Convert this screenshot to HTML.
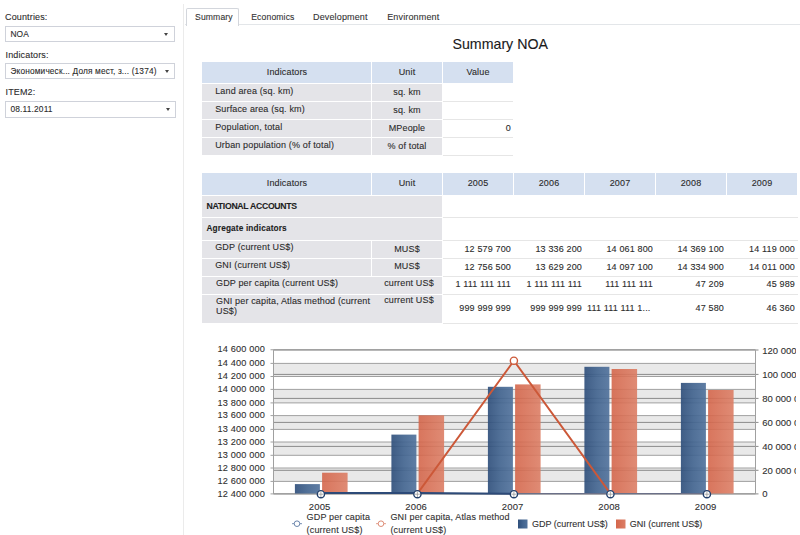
<!DOCTYPE html>
<html><head><meta charset="utf-8"><title>Summary NOA</title>
<style>
html,body{margin:0;padding:0;background:#fff;width:800px;height:535px;overflow:hidden;position:relative}
body{font-family:"Liberation Sans", sans-serif}
.t{position:absolute;white-space:pre;font-family:"Liberation Sans", sans-serif;-webkit-text-stroke:0.1px currentColor;letter-spacing:0.15px}
.r{position:absolute}
</style></head><body>
<div class="t" style="left:5.00px;top:13.38px;font-size:9px;line-height:9px;color:#2b2b2b;font-weight:normal;">Countries:</div>
<div class="r" style="left:5px;top:26px;width:168px;height:14px;border:1px solid #cfd2da;background:#fff"></div>
<div class="t" style="left:10.40px;top:29.79px;font-size:8.4px;line-height:8.4px;color:#2b2b2b;font-weight:normal;">NOA</div>
<div class="r" style="left:164px;top:32.5px;width:0;height:0;border-left:2.5px solid transparent;border-right:2.5px solid transparent;border-top:3px solid #444"></div>
<div class="t" style="left:5.50px;top:50.68px;font-size:9px;line-height:9px;color:#2b2b2b;font-weight:normal;">Indicators:</div>
<div class="r" style="left:5px;top:63px;width:168px;height:14px;border:1px solid #cfd2da;background:#fff"></div>
<div class="t" style="left:10.50px;top:67.37px;font-size:8.3px;line-height:8.3px;color:#2b2b2b;font-weight:normal;">Экономическ... Доля мест, з... (1374)</div>
<div class="r" style="left:164.5px;top:70px;width:0;height:0;border-left:2.5px solid transparent;border-right:2.5px solid transparent;border-top:3px solid #444"></div>
<div class="t" style="left:5.50px;top:88.38px;font-size:9px;line-height:9px;color:#2b2b2b;font-weight:normal;">ITEM2:</div>
<div class="r" style="left:5px;top:101px;width:169px;height:15px;border:1px solid #cfd2da;background:#fff"></div>
<div class="t" style="left:10.50px;top:105.09px;font-size:8.4px;line-height:8.4px;color:#2b2b2b;font-weight:normal;">08.11.2011</div>
<div class="r" style="left:165.5px;top:108px;width:0;height:0;border-left:2.5px solid transparent;border-right:2.5px solid transparent;border-top:3px solid #444"></div>
<div class="r" style="left:183px;top:4px;width:1px;height:531px;background:#ebebeb;"></div>
<div class="r" style="left:185px;top:24px;width:615px;height:1px;background:#e3e6e9;"></div>
<div class="r" style="left:186px;top:8px;width:51px;height:17px;border:1px solid #d3d6dc;border-bottom:none;background:#fff;border-radius:2px 2px 0 0"></div>
<div class="t" style="left:195.00px;top:13.32px;font-size:8.6px;line-height:8.6px;color:#333;font-weight:normal;">Summary</div>
<div class="t" style="left:251.20px;top:13.12px;font-size:8.6px;line-height:8.6px;color:#333;font-weight:normal;">Economics</div>
<div class="t" style="left:313.00px;top:12.78px;font-size:9px;line-height:9px;color:#333;font-weight:normal;">Development</div>
<div class="t" style="left:387.20px;top:12.78px;font-size:9px;line-height:9px;color:#333;font-weight:normal;">Environment</div>
<div class="t" style="left:452.50px;top:37.48px;font-size:14.2px;line-height:14.2px;color:#1a1a1a;font-weight:normal;letter-spacing:0">Summary NOA</div>
<div class="r" style="left:202px;top:62px;width:169px;height:21px;background:#d5e0f0;"></div>
<div class="r" style="left:372px;top:62px;width:70px;height:21px;background:#d5e0f0;"></div>
<div class="r" style="left:443px;top:62px;width:70px;height:21px;background:#d5e0f0;"></div>
<div class="t" style="left:187.00px;width:200px;top:67.98px;font-size:9px;line-height:9px;color:#2b2b2b;font-weight:normal;text-align:center;">Indicators</div>
<div class="t" style="left:307.00px;width:200px;top:67.98px;font-size:9px;line-height:9px;color:#2b2b2b;font-weight:normal;text-align:center;">Unit</div>
<div class="t" style="left:378.00px;width:200px;top:67.98px;font-size:9px;line-height:9px;color:#2b2b2b;font-weight:normal;text-align:center;">Value</div>
<div class="r" style="left:202px;top:84px;width:169px;height:17px;background:#e4e4e8;"></div>
<div class="r" style="left:372px;top:84px;width:70px;height:17px;background:#e4e4e8;"></div>
<div class="r" style="left:443px;top:101px;width:70px;height:1px;background:#e6e6e6;"></div>
<div class="t" style="left:215.20px;top:87.18px;font-size:9px;line-height:9px;color:#2b2b2b;font-weight:normal;">Land area (sq. km)</div>
<div class="t" style="left:307.00px;width:200px;top:87.88px;font-size:9px;line-height:9px;color:#2b2b2b;font-weight:normal;text-align:center;">sq. km</div>
<div class="r" style="left:202px;top:102px;width:169px;height:17px;background:#e4e4e8;"></div>
<div class="r" style="left:372px;top:102px;width:70px;height:17px;background:#e4e4e8;"></div>
<div class="r" style="left:443px;top:119px;width:70px;height:1px;background:#e6e6e6;"></div>
<div class="t" style="left:215.20px;top:105.18px;font-size:9px;line-height:9px;color:#2b2b2b;font-weight:normal;">Surface area (sq. km)</div>
<div class="t" style="left:307.00px;width:200px;top:105.88px;font-size:9px;line-height:9px;color:#2b2b2b;font-weight:normal;text-align:center;">sq. km</div>
<div class="r" style="left:202px;top:120px;width:169px;height:17px;background:#e4e4e8;"></div>
<div class="r" style="left:372px;top:120px;width:70px;height:17px;background:#e4e4e8;"></div>
<div class="r" style="left:443px;top:137px;width:70px;height:1px;background:#e6e6e6;"></div>
<div class="t" style="left:215.20px;top:123.18px;font-size:9px;line-height:9px;color:#2b2b2b;font-weight:normal;">Population, total</div>
<div class="t" style="left:307.00px;width:200px;top:123.88px;font-size:9px;line-height:9px;color:#2b2b2b;font-weight:normal;text-align:center;">MPeople</div>
<div class="t" style="right:289.00px;top:123.88px;font-size:9px;line-height:9px;color:#2b2b2b;font-weight:normal;text-align:right;">0</div>
<div class="r" style="left:202px;top:138px;width:169px;height:17px;background:#e4e4e8;"></div>
<div class="r" style="left:372px;top:138px;width:70px;height:17px;background:#e4e4e8;"></div>
<div class="r" style="left:443px;top:155px;width:70px;height:1px;background:#e6e6e6;"></div>
<div class="t" style="left:215.20px;top:141.18px;font-size:9px;line-height:9px;color:#2b2b2b;font-weight:normal;">Urban population (% of total)</div>
<div class="t" style="left:307.00px;width:200px;top:141.88px;font-size:9px;line-height:9px;color:#2b2b2b;font-weight:normal;text-align:center;">% of total</div>
<div class="r" style="left:202px;top:173px;width:169px;height:22px;background:#d5e0f0;"></div>
<div class="r" style="left:372px;top:173px;width:70px;height:22px;background:#d5e0f0;"></div>
<div class="r" style="left:443px;top:173px;width:70px;height:22px;background:#d5e0f0;"></div>
<div class="t" style="left:378.00px;width:200px;top:179.18px;font-size:9px;line-height:9px;color:#2b2b2b;font-weight:normal;text-align:center;">2005</div>
<div class="r" style="left:514px;top:173px;width:70px;height:22px;background:#d5e0f0;"></div>
<div class="t" style="left:449.00px;width:200px;top:179.18px;font-size:9px;line-height:9px;color:#2b2b2b;font-weight:normal;text-align:center;">2006</div>
<div class="r" style="left:585px;top:173px;width:70px;height:22px;background:#d5e0f0;"></div>
<div class="t" style="left:520.00px;width:200px;top:179.18px;font-size:9px;line-height:9px;color:#2b2b2b;font-weight:normal;text-align:center;">2007</div>
<div class="r" style="left:656px;top:173px;width:70px;height:22px;background:#d5e0f0;"></div>
<div class="t" style="left:591.00px;width:200px;top:179.18px;font-size:9px;line-height:9px;color:#2b2b2b;font-weight:normal;text-align:center;">2008</div>
<div class="r" style="left:727px;top:173px;width:70px;height:22px;background:#d5e0f0;"></div>
<div class="t" style="left:662.00px;width:200px;top:179.18px;font-size:9px;line-height:9px;color:#2b2b2b;font-weight:normal;text-align:center;">2009</div>
<div class="t" style="left:187.00px;width:200px;top:179.18px;font-size:9px;line-height:9px;color:#2b2b2b;font-weight:normal;text-align:center;">Indicators</div>
<div class="t" style="left:307.00px;width:200px;top:179.18px;font-size:9px;line-height:9px;color:#2b2b2b;font-weight:normal;text-align:center;">Unit</div>
<div class="r" style="left:202px;top:196px;width:240px;height:21px;background:#e4e4e8;"></div>
<div class="r" style="left:443px;top:217px;width:355px;height:1px;background:#e6e6e6;"></div>
<div class="r" style="left:202px;top:218px;width:240px;height:22px;background:#e4e4e8;"></div>
<div class="r" style="left:443px;top:240px;width:355px;height:1px;background:#e6e6e6;"></div>
<div class="r" style="left:202px;top:241px;width:240px;height:17px;background:#e4e4e8;"></div>
<div class="r" style="left:443px;top:258px;width:355px;height:1px;background:#e6e6e6;"></div>
<div class="r" style="left:202px;top:259px;width:240px;height:17px;background:#e4e4e8;"></div>
<div class="r" style="left:443px;top:276px;width:355px;height:1px;background:#e6e6e6;"></div>
<div class="r" style="left:202px;top:277px;width:240px;height:17px;background:#e4e4e8;"></div>
<div class="r" style="left:443px;top:294px;width:355px;height:1px;background:#e6e6e6;"></div>
<div class="r" style="left:202px;top:295px;width:240px;height:28px;background:#e4e4e8;"></div>
<div class="r" style="left:443px;top:323px;width:355px;height:1px;background:#e6e6e6;"></div>
<div class="r" style="left:371px;top:241px;width:1px;height:17px;background:#fff;"></div>
<div class="r" style="left:371px;top:259px;width:1px;height:17px;background:#fff;"></div>
<div class="t" style="left:206.50px;top:201.94px;font-size:8.7px;line-height:8.7px;color:#1e1e1e;font-weight:bold;letter-spacing:-0.3px">NATIONAL ACCOUNTS</div>
<div class="t" style="left:206.50px;top:225.12px;font-size:8.25px;line-height:8.25px;color:#1e1e1e;font-weight:bold;">Agregate indicators</div>
<div class="t" style="left:215.20px;top:242.98px;font-size:9px;line-height:9px;color:#2b2b2b;font-weight:normal;">GDP (current US$)</div>
<div class="t" style="left:215.20px;top:260.78px;font-size:9px;line-height:9px;color:#2b2b2b;font-weight:normal;">GNI (current US$)</div>
<div class="t" style="left:216.00px;top:278.58px;font-size:9px;line-height:9px;color:#2b2b2b;font-weight:normal;">GDP per capita (current US$)</div>
<div class="t" style="left:216.00px;top:296.68px;font-size:9px;line-height:9px;color:#2b2b2b;font-weight:normal;">GNI per capita, Atlas method (current</div>
<div class="t" style="left:216.00px;top:307.38px;font-size:9px;line-height:9px;color:#2b2b2b;font-weight:normal;">US$)</div>
<div class="t" style="left:307.00px;width:200px;top:244.58px;font-size:9px;line-height:9px;color:#2b2b2b;font-weight:normal;text-align:center;">MUS$</div>
<div class="t" style="left:307.00px;width:200px;top:262.48px;font-size:9px;line-height:9px;color:#2b2b2b;font-weight:normal;text-align:center;">MUS$</div>
<div class="t" style="left:309.00px;width:200px;top:278.58px;font-size:9px;line-height:9px;color:#2b2b2b;font-weight:normal;text-align:center;">current US$</div>
<div class="t" style="left:309.00px;width:200px;top:296.48px;font-size:9px;line-height:9px;color:#2b2b2b;font-weight:normal;text-align:center;">current US$</div>
<div class="t" style="right:289.00px;top:244.68px;font-size:9px;line-height:9px;color:#2b2b2b;font-weight:normal;text-align:right;">12 579 700</div>
<div class="t" style="right:218.00px;top:244.68px;font-size:9px;line-height:9px;color:#2b2b2b;font-weight:normal;text-align:right;">13 336 200</div>
<div class="t" style="right:147.00px;top:244.68px;font-size:9px;line-height:9px;color:#2b2b2b;font-weight:normal;text-align:right;">14 061 800</div>
<div class="t" style="right:76.00px;top:244.68px;font-size:9px;line-height:9px;color:#2b2b2b;font-weight:normal;text-align:right;">14 369 100</div>
<div class="t" style="right:5.00px;top:244.68px;font-size:9px;line-height:9px;color:#2b2b2b;font-weight:normal;text-align:right;">14 119 000</div>
<div class="t" style="right:289.00px;top:262.58px;font-size:9px;line-height:9px;color:#2b2b2b;font-weight:normal;text-align:right;">12 756 500</div>
<div class="t" style="right:218.00px;top:262.58px;font-size:9px;line-height:9px;color:#2b2b2b;font-weight:normal;text-align:right;">13 629 200</div>
<div class="t" style="right:147.00px;top:262.58px;font-size:9px;line-height:9px;color:#2b2b2b;font-weight:normal;text-align:right;">14 097 100</div>
<div class="t" style="right:76.00px;top:262.58px;font-size:9px;line-height:9px;color:#2b2b2b;font-weight:normal;text-align:right;">14 334 900</div>
<div class="t" style="right:5.00px;top:262.58px;font-size:9px;line-height:9px;color:#2b2b2b;font-weight:normal;text-align:right;">14 011 000</div>
<div class="t" style="right:289.00px;top:280.38px;font-size:9px;line-height:9px;color:#2b2b2b;font-weight:normal;text-align:right;">1 111 111 111</div>
<div class="t" style="right:218.00px;top:280.38px;font-size:9px;line-height:9px;color:#2b2b2b;font-weight:normal;text-align:right;">1 111 111 111</div>
<div class="t" style="right:147.00px;top:280.38px;font-size:9px;line-height:9px;color:#2b2b2b;font-weight:normal;text-align:right;">111 111 111</div>
<div class="t" style="right:76.00px;top:280.38px;font-size:9px;line-height:9px;color:#2b2b2b;font-weight:normal;text-align:right;">47 209</div>
<div class="t" style="right:5.00px;top:280.38px;font-size:9px;line-height:9px;color:#2b2b2b;font-weight:normal;text-align:right;">45 989</div>
<div class="t" style="right:289.00px;top:304.38px;font-size:9px;line-height:9px;color:#2b2b2b;font-weight:normal;text-align:right;">999 999 999</div>
<div class="t" style="right:218.00px;top:304.38px;font-size:9px;line-height:9px;color:#2b2b2b;font-weight:normal;text-align:right;">999 999 999</div>
<div class="t" style="left:587.00px;top:304.38px;font-size:9px;line-height:9px;color:#2b2b2b;font-weight:normal;">111 111 111 1...</div>
<div class="t" style="right:76.00px;top:304.38px;font-size:9px;line-height:9px;color:#2b2b2b;font-weight:normal;text-align:right;">47 580</div>
<div class="t" style="right:5.00px;top:304.38px;font-size:9px;line-height:9px;color:#2b2b2b;font-weight:normal;text-align:right;">46 360</div>
<svg class="r" style="left:0;top:0" width="800" height="535" viewBox="0 0 800 535"><rect x="273.5" y="468.00" width="482.0" height="13.40" fill="#e9e9e9"/><rect x="273.5" y="442.00" width="482.0" height="13.30" fill="#e9e9e9"/><rect x="273.5" y="415.60" width="482.0" height="13.80" fill="#e9e9e9"/><rect x="273.5" y="389.40" width="482.0" height="13.50" fill="#e9e9e9"/><rect x="273.5" y="363.40" width="482.0" height="13.10" fill="#e9e9e9"/><line x1="270.5" y1="493.9" x2="755.5" y2="493.9" stroke="#a0a0a0" stroke-width="1"/><line x1="270.5" y1="481.4" x2="755.5" y2="481.4" stroke="#a0a0a0" stroke-width="1"/><line x1="270.5" y1="468.0" x2="755.5" y2="468.0" stroke="#a0a0a0" stroke-width="1"/><line x1="270.5" y1="455.3" x2="755.5" y2="455.3" stroke="#a0a0a0" stroke-width="1"/><line x1="270.5" y1="442.0" x2="755.5" y2="442.0" stroke="#a0a0a0" stroke-width="1"/><line x1="270.5" y1="429.4" x2="755.5" y2="429.4" stroke="#a0a0a0" stroke-width="1"/><line x1="270.5" y1="415.6" x2="755.5" y2="415.6" stroke="#a0a0a0" stroke-width="1"/><line x1="270.5" y1="402.9" x2="755.5" y2="402.9" stroke="#a0a0a0" stroke-width="1"/><line x1="270.5" y1="389.4" x2="755.5" y2="389.4" stroke="#a0a0a0" stroke-width="1"/><line x1="270.5" y1="376.5" x2="755.5" y2="376.5" stroke="#a0a0a0" stroke-width="1"/><line x1="270.5" y1="363.4" x2="755.5" y2="363.4" stroke="#a0a0a0" stroke-width="1"/><line x1="270.5" y1="349.75" x2="755.5" y2="349.75" stroke="#a0a0a0" stroke-width="1"/><line x1="273.5" y1="493.9" x2="758.5" y2="493.9" stroke="#8a8a8a" stroke-width="1"/><line x1="273.5" y1="470.3" x2="758.5" y2="470.3" stroke="#8a8a8a" stroke-width="1"/><line x1="273.5" y1="446.4" x2="758.5" y2="446.4" stroke="#8a8a8a" stroke-width="1"/><line x1="273.5" y1="422.4" x2="758.5" y2="422.4" stroke="#8a8a8a" stroke-width="1"/><line x1="273.5" y1="398.4" x2="758.5" y2="398.4" stroke="#8a8a8a" stroke-width="1"/><line x1="273.5" y1="374.4" x2="758.5" y2="374.4" stroke="#8a8a8a" stroke-width="1"/><line x1="273.5" y1="350.0" x2="758.5" y2="350.0" stroke="#8a8a8a" stroke-width="1"/><line x1="273.5" y1="350.1" x2="273.5" y2="494.0" stroke="#a0a0a0" stroke-width="1"/><line x1="755.5" y1="350.1" x2="755.5" y2="494.0" stroke="#a0a0a0" stroke-width="1"/><defs><linearGradient id="gb" x1="0" x2="1" y1="0" y2="0"><stop offset="0" stop-color="#2f4f7b"/><stop offset="0.5" stop-color="#42648f"/><stop offset="1" stop-color="#51729c"/></linearGradient><linearGradient id="go" x1="0" x2="1" y1="0" y2="0"><stop offset="0" stop-color="#d4664b"/><stop offset="1" stop-color="#dc7e65"/></linearGradient></defs><rect x="294.90" y="484.1" width="25" height="9.40" fill="url(#gb)" opacity="0.92"/><rect x="322.10" y="472.7" width="25.5" height="20.80" fill="url(#go)" opacity="0.9"/><rect x="391.40" y="434.6" width="25" height="58.90" fill="url(#gb)" opacity="0.92"/><rect x="418.60" y="415.3" width="25.5" height="78.20" fill="url(#go)" opacity="0.9"/><rect x="487.90" y="386.8" width="25" height="106.70" fill="url(#gb)" opacity="0.92"/><rect x="515.10" y="384.4" width="25.5" height="109.10" fill="url(#go)" opacity="0.9"/><rect x="584.40" y="366.8" width="25" height="126.70" fill="url(#gb)" opacity="0.92"/><rect x="611.60" y="369.0" width="25.5" height="124.50" fill="url(#go)" opacity="0.9"/><rect x="680.90" y="382.9" width="25" height="110.60" fill="url(#gb)" opacity="0.92"/><rect x="708.10" y="390.0" width="25.5" height="103.50" fill="url(#go)" opacity="0.9"/><polyline points="417.4,493.6 513.9,360.7 610.4,493.6" fill="none" stroke="#cc5838" stroke-width="1.9"/><polyline points="320.9,493 417.4,493 513.9,493.8" fill="none" stroke="#2d4a78" stroke-width="2"/><polyline points="513.9,493.6 706.9,493.6" fill="none" stroke="#6b7088" stroke-width="1.1"/><circle cx="513.9" cy="360.7" r="3.6" fill="#fff" stroke="#cc5838" stroke-width="1.4"/><circle cx="320.9" cy="494.2" r="3.6" fill="#fff" stroke="#24406b" stroke-width="1.4"/><line x1="320.9" y1="491.5" x2="320.9" y2="497" stroke="#999" stroke-width="0.8"/><line x1="318.4" y1="494.2" x2="323.4" y2="494.2" stroke="#999" stroke-width="0.8"/><circle cx="417.4" cy="494.2" r="3.6" fill="#fff" stroke="#24406b" stroke-width="1.4"/><line x1="417.4" y1="491.5" x2="417.4" y2="497" stroke="#999" stroke-width="0.8"/><line x1="414.9" y1="494.2" x2="419.9" y2="494.2" stroke="#999" stroke-width="0.8"/><circle cx="513.9" cy="494.2" r="3.6" fill="#fff" stroke="#24406b" stroke-width="1.4"/><line x1="513.9" y1="491.5" x2="513.9" y2="497" stroke="#999" stroke-width="0.8"/><line x1="511.4" y1="494.2" x2="516.4" y2="494.2" stroke="#999" stroke-width="0.8"/><circle cx="610.4" cy="494.2" r="3.6" fill="#fff" stroke="#24406b" stroke-width="1.4"/><line x1="610.4" y1="491.5" x2="610.4" y2="497" stroke="#999" stroke-width="0.8"/><line x1="607.9" y1="494.2" x2="612.9" y2="494.2" stroke="#999" stroke-width="0.8"/><circle cx="706.9" cy="494.2" r="3.6" fill="#fff" stroke="#24406b" stroke-width="1.4"/><line x1="706.9" y1="491.5" x2="706.9" y2="497" stroke="#999" stroke-width="0.8"/><line x1="704.4" y1="494.2" x2="709.4" y2="494.2" stroke="#999" stroke-width="0.8"/><line x1="292" y1="523.7" x2="302" y2="523.7" stroke="#6a86ae" stroke-width="0.9"/><circle cx="297" cy="523.7" r="2.8" fill="#fff" stroke="#5a78a3" stroke-width="0.9"/><line x1="376" y1="523.7" x2="386" y2="523.7" stroke="#e09580" stroke-width="0.9"/><circle cx="381" cy="523.7" r="2.8" fill="#fff" stroke="#d98068" stroke-width="0.9"/><rect x="518" y="519.5" width="9.5" height="9" fill="url(#gb)"/><rect x="616" y="519.5" width="9.5" height="9" fill="url(#go)"/></svg>
<div class="t" style="right:535.00px;top:489.51px;font-size:9.2px;line-height:9.2px;color:#303030;font-weight:normal;text-align:right;">12 400 000</div>
<div class="t" style="right:535.00px;top:477.01px;font-size:9.2px;line-height:9.2px;color:#303030;font-weight:normal;text-align:right;">12 600 000</div>
<div class="t" style="right:535.00px;top:463.61px;font-size:9.2px;line-height:9.2px;color:#303030;font-weight:normal;text-align:right;">12 800 000</div>
<div class="t" style="right:535.00px;top:450.91px;font-size:9.2px;line-height:9.2px;color:#303030;font-weight:normal;text-align:right;">13 000 000</div>
<div class="t" style="right:535.00px;top:437.61px;font-size:9.2px;line-height:9.2px;color:#303030;font-weight:normal;text-align:right;">13 200 000</div>
<div class="t" style="right:535.00px;top:425.01px;font-size:9.2px;line-height:9.2px;color:#303030;font-weight:normal;text-align:right;">13 400 000</div>
<div class="t" style="right:535.00px;top:411.21px;font-size:9.2px;line-height:9.2px;color:#303030;font-weight:normal;text-align:right;">13 600 000</div>
<div class="t" style="right:535.00px;top:398.51px;font-size:9.2px;line-height:9.2px;color:#303030;font-weight:normal;text-align:right;">13 800 000</div>
<div class="t" style="right:535.00px;top:385.01px;font-size:9.2px;line-height:9.2px;color:#303030;font-weight:normal;text-align:right;">14 000 000</div>
<div class="t" style="right:535.00px;top:372.11px;font-size:9.2px;line-height:9.2px;color:#303030;font-weight:normal;text-align:right;">14 200 000</div>
<div class="t" style="right:535.00px;top:359.01px;font-size:9.2px;line-height:9.2px;color:#303030;font-weight:normal;text-align:right;">14 400 000</div>
<div class="t" style="right:535.00px;top:345.36px;font-size:9.2px;line-height:9.2px;color:#303030;font-weight:normal;text-align:right;">14 600 000</div>
<div class="t" style="left:762.20px;top:489.46px;font-size:9.5px;line-height:9.5px;color:#303030;font-weight:normal;width:34px;overflow:hidden;white-space:nowrap;letter-spacing:0">0</div>
<div class="t" style="left:762.20px;top:465.86px;font-size:9.5px;line-height:9.5px;color:#303030;font-weight:normal;width:34px;overflow:hidden;white-space:nowrap;letter-spacing:0">20 000 000</div>
<div class="t" style="left:762.20px;top:441.96px;font-size:9.5px;line-height:9.5px;color:#303030;font-weight:normal;width:34px;overflow:hidden;white-space:nowrap;letter-spacing:0">40 000 000</div>
<div class="t" style="left:762.20px;top:417.96px;font-size:9.5px;line-height:9.5px;color:#303030;font-weight:normal;width:34px;overflow:hidden;white-space:nowrap;letter-spacing:0">60 000 000</div>
<div class="t" style="left:762.20px;top:393.96px;font-size:9.5px;line-height:9.5px;color:#303030;font-weight:normal;width:34px;overflow:hidden;white-space:nowrap;letter-spacing:0">80 000 000</div>
<div class="t" style="left:762.20px;top:369.96px;font-size:9.5px;line-height:9.5px;color:#303030;font-weight:normal;width:34px;overflow:hidden;white-space:nowrap;letter-spacing:0">100 000</div>
<div class="t" style="left:762.20px;top:345.56px;font-size:9.5px;line-height:9.5px;color:#303030;font-weight:normal;width:34px;overflow:hidden;white-space:nowrap;letter-spacing:0">120 000</div>
<div class="t" style="left:219.70px;width:200px;top:502.26px;font-size:9.5px;line-height:9.5px;color:#303030;font-weight:normal;text-align:center;">2005</div>
<div class="t" style="left:316.20px;width:200px;top:502.26px;font-size:9.5px;line-height:9.5px;color:#303030;font-weight:normal;text-align:center;">2006</div>
<div class="t" style="left:412.70px;width:200px;top:502.26px;font-size:9.5px;line-height:9.5px;color:#303030;font-weight:normal;text-align:center;">2007</div>
<div class="t" style="left:509.20px;width:200px;top:502.26px;font-size:9.5px;line-height:9.5px;color:#303030;font-weight:normal;text-align:center;">2008</div>
<div class="t" style="left:605.70px;width:200px;top:502.26px;font-size:9.5px;line-height:9.5px;color:#303030;font-weight:normal;text-align:center;">2009</div>
<div class="t" style="left:306.60px;top:513.38px;font-size:9px;line-height:9px;color:#303030;font-weight:normal;">GDP per capita</div>
<div class="t" style="left:306.60px;top:525.78px;font-size:9px;line-height:9px;color:#303030;font-weight:normal;">(current US$)</div>
<div class="t" style="left:390.40px;top:513.38px;font-size:9px;line-height:9px;color:#303030;font-weight:normal;">GNI per capita, Atlas method</div>
<div class="t" style="left:390.40px;top:525.78px;font-size:9px;line-height:9px;color:#303030;font-weight:normal;">(current US$)</div>
<div class="t" style="left:532.00px;top:519.98px;font-size:9px;line-height:9px;color:#303030;font-weight:normal;letter-spacing:0">GDP (current US$)</div>
<div class="t" style="left:629.80px;top:519.98px;font-size:9px;line-height:9px;color:#303030;font-weight:normal;letter-spacing:0">GNI (current US$)</div>
</body></html>
